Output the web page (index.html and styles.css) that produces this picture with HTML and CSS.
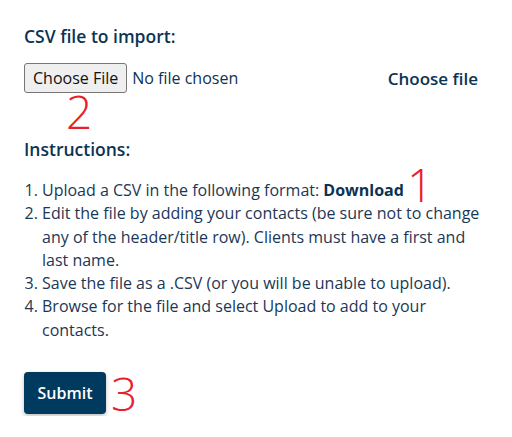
FILE: index.html
```html
<!DOCTYPE html>
<html lang="en">
<head>
  <meta charset="UTF-8">
  <title>Import Contacts</title>
  <link rel="stylesheet" href="styles.css">
</head>
<body>
  <form class="import-form">
    <label class="field-label" for="csvFile">CSV file to import:</label>

    <div class="file-row">
      <input type="file" id="csvFile" accept=".csv" />
      <span class="file-title">Choose file</span>
    </div>
    <div class="marker marker-2">2</div>

    <h4 class="field-label">Instructions:</h4>
    <ol class="steps">
      <li>Upload a CSV in the following format: <a href="#" class="download">Download</a><span class="marker marker-1">1</span></li>
      <li>Edit the file by adding your contacts (be sure not to change any of the header/title row). Clients must have a first and last name.</li>
      <li>Save the file as a .CSV (or you will be unable to upload).</li>
      <li>Browse for the file and select Upload to add to your contacts.</li>
    </ol>

    <div class="actions">
      <button type="submit" id="submit">Submit</button>
      <span class="marker marker-3">3</span>
    </div>
  </form>
</body>
</html>
```

FILE: styles.css
```css
body {
  margin: 0;
  background-color: #fff;
  font-family: 'Open Sans', 'Noto Sans', sans-serif;
  color: #0d2f4f;
}
.import-form {
  padding: 25px 20px 0 24px;
}
.field-label {
  display: block;
  margin: 0;
  font-size: 17.5px;
  font-weight: 600;
  color: #0b3354;
  line-height: 22px;
}
.file-row {
  display: flex;
  align-items: center;
  justify-content: space-between;
  margin-top: 16px;
}
#csvFile {
  font-family: 'Open Sans', sans-serif;
  font-size: 16px;
  color: #0b3354;
}
#csvFile::file-selector-button {
  font-family: 'Open Sans', sans-serif;
  font-size: 16px;
  color: #111;
  background-color: #efefef;
  border: 1px solid #767676;
  border-radius: 3px;
  padding: 2px 8px;
  margin-right: 5px;
  height: 30px;
}
.file-title {
  font-size: 17px;
  font-weight: 600;
  color: #0b3354;
  margin-right: 14px;
}
.marker {
  font-family: 'Open Sans', sans-serif;
  font-weight: 300;
  font-size: 46px;
  line-height: 1;
  color: #e8202a;
}
.marker-2 {
  margin: -5px 0 4px 42px;
}
.marker-1 {
  display: inline-block;
  vertical-align: -6px;
  margin-left: 3px;
  line-height: 20px;
}
.steps {
  margin: 14px 0 0;
  padding-left: 18px;
  font-size: 16px;
  line-height: 23.3px;
  color: #1b3756;
}
.download {
  font-weight: 700;
  color: #0b3354;
  text-decoration: none;
}
.actions {
  display: flex;
  align-items: center;
  margin-top: 28px;
}
#submit {
  width: 82px;
  height: 42px;
  font-family: 'Open Sans', sans-serif;
  font-size: 16px;
  font-weight: 600;
  color: #fff;
  background-color: #003a5f;
  border: none;
  border-radius: 4px;
  box-shadow: 0 2px 4px rgba(0, 0, 0, 0.25);
  cursor: pointer;
}
.marker-3 {
  margin-left: 5px;
}
```
